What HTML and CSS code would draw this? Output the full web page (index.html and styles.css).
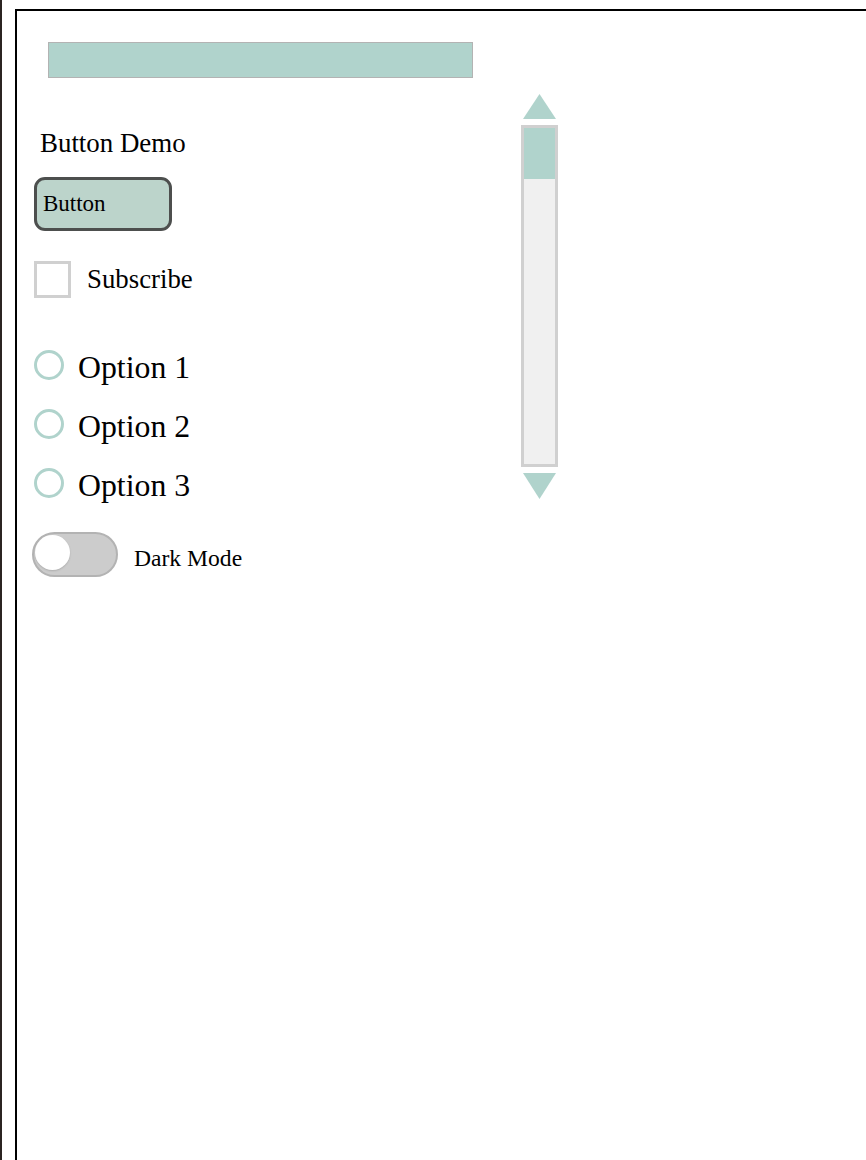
FILE: index.html
```html
<!DOCTYPE html>
<html>
<head>
<meta charset="utf-8">
<link rel="stylesheet" href="styles.css">
</head>
<body>
<div class="page">
  <div class="edge"></div>
  <div class="frame">
    <div class="topbar"></div>
    <div class="main">
      <div class="controls">
        <div class="heading">Button Demo</div>
        <button class="btn">Button</button>
        <label class="check-row">
          <span class="checkbox"></span>
          <span class="check-label">Subscribe</span>
        </label>
        <div class="radios">
          <div class="radio-row"><span class="radio"></span><span class="radio-label">Option 1</span></div>
          <div class="radio-row"><span class="radio"></span><span class="radio-label">Option 2</span></div>
          <div class="radio-row"><span class="radio"></span><span class="radio-label">Option 3</span></div>
        </div>
        <div class="toggle-row">
          <span class="toggle"><span class="knob"></span></span>
          <span class="toggle-label">Dark Mode</span>
        </div>
      </div>
      <div class="scroll">
        <svg class="arrow" width="33" height="25" viewBox="0 0 33 25"><polygon points="16.5,0 33,25 0,25" fill="#b0d3cc"/></svg>
        <div class="track"><div class="thumb"></div></div>
        <svg class="arrow" width="33" height="26" viewBox="0 0 33 26"><polygon points="0,0 33,0 16.5,26" fill="#b0d3cc"/></svg>
      </div>
    </div>
  </div>
</div>
</body>
</html>
```

FILE: styles.css
```css
html, body {
  margin: 0;
  padding: 0;
  background: #ffffff;
  overflow: hidden;
}

body {
  font-family: "Liberation Serif", "Times New Roman", serif;
  color: #000;
}

.page {
  display: flex;
  width: 866px;
  height: 1160px;
  overflow: hidden;
}

.edge {
  flex: 0 0 2px;
  height: 1160px;
  background: #2b2421;
}

.frame {
  flex: 0 0 900px;
  margin-left: 13px;
  margin-top: 9px;
  height: 1300px;
  border-top: 2px solid #000;
  border-left: 2px solid #000;
  box-sizing: border-box;
  padding-top: 31px;
}

.topbar {
  margin-left: 31px;
  width: 425px;
  height: 36px;
  box-sizing: border-box;
  background: #b0d3cc;
  border: 1px solid #b3b3b3;
}

.main {
  display: flex;
  margin-left: 17px;
  margin-top: 16px;
}

.controls {
  width: 487px;
  display: flex;
  flex-direction: column;
  align-items: flex-start;
}

.heading {
  margin-top: 34px;
  margin-left: 6px;
  font-size: 26.9px;
  line-height: 30px;
}

.btn {
  margin-top: 19px;
  width: 138px;
  height: 54px;
  box-sizing: border-box;
  border: 3px solid #4d4f4e;
  border-radius: 11px;
  background: #bcd4cb;
  font-family: "Liberation Serif", "Times New Roman", serif;
  font-size: 23px;
  line-height: 48px;
  text-align: left;
  padding: 0 0 0 6px;
  color: #000;
}

.check-row {
  margin-top: 30px;
  display: flex;
  align-items: flex-start;
}

.checkbox {
  width: 37px;
  height: 37px;
  box-sizing: border-box;
  border: 3px solid #d0d0d0;
  background: #fff;
}

.check-label {
  margin-left: 16px;
  margin-top: 3px;
  font-size: 26.8px;
  line-height: 30px;
}

.radios {
  margin-top: 49px;
  display: flex;
  flex-direction: column;
  gap: 23px;
}

.radio-row {
  display: flex;
  align-items: center;
  height: 36px;
}

.radio {
  width: 30px;
  height: 30px;
  box-sizing: border-box;
  border: 3px solid #b0d3cc;
  border-radius: 50%;
}

.radio-label {
  margin-left: 14px;
  margin-top: 5px;
  font-size: 31.8px;
  line-height: 36px;
}

.toggle-row {
  margin-top: 31px;
  margin-left: -2px;
  display: flex;
  align-items: flex-start;
}

.toggle {
  width: 86px;
  height: 45px;
  box-sizing: border-box;
  border: 2px solid #b3b3b3;
  border-radius: 23px;
  background: #cccccc;
  padding: 1px;
  display: flex;
  align-items: flex-start;
}

.knob {
  width: 35px;
  height: 35px;
  border-radius: 50%;
  background: #ffffff;
  box-shadow: 0 1px 2px rgba(0, 0, 0, 0.15);
}

.toggle-label {
  margin-left: 16px;
  margin-top: 13px;
  font-size: 23.6px;
  line-height: 26px;
}

.scroll {
  width: 37px;
  display: flex;
  flex-direction: column;
  align-items: center;
}

.arrow {
  display: block;
}

.track {
  margin: 6px 0;
  width: 37px;
  height: 342px;
  box-sizing: border-box;
  border: 3px solid #d0d0d0;
  background: #f0f0f0;
}

.thumb {
  height: 51px;
  background: #b0d3cc;
}
```
